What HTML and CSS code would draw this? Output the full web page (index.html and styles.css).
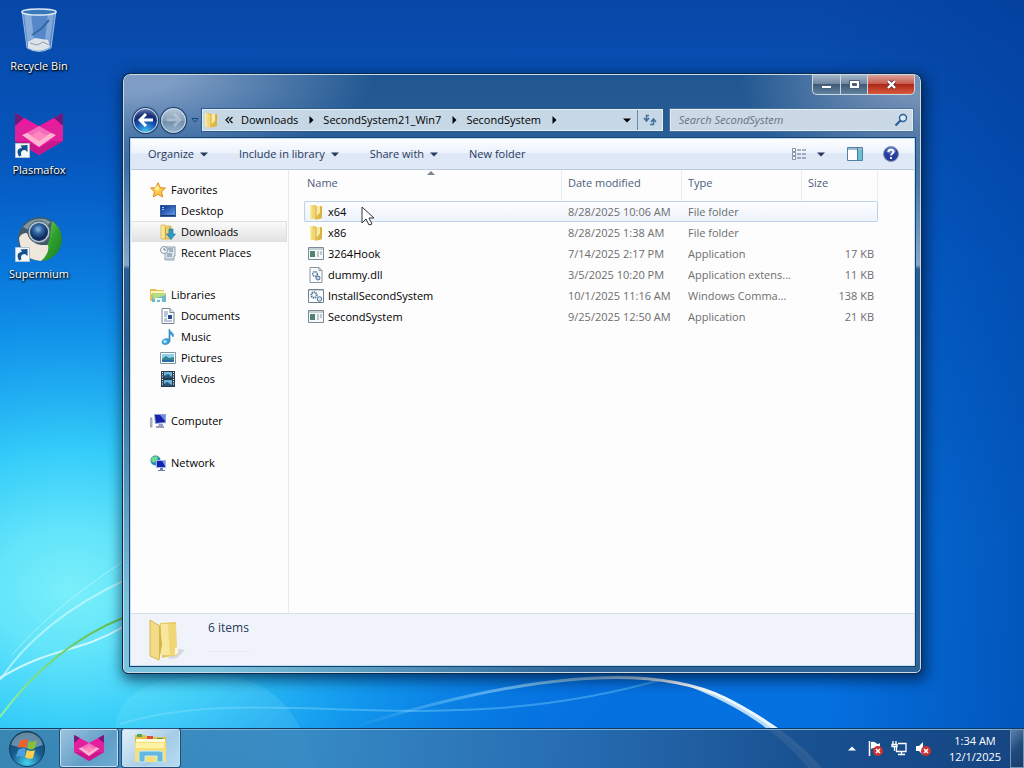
FILE: index.html
```html
<!DOCTYPE html>
<html lang="en">
<head>
<meta charset="utf-8">
<meta name="viewport" content="width=device-width, initial-scale=1">
<title>SecondSystem</title>
<link rel="stylesheet" href="styles.css">
</head>
<body>
<svg class="defs" width="0" height="0" aria-hidden="true">
  <defs>
    <linearGradient id="gold" x1="0" x2="1"><stop offset="0" stop-color="#fdf0a8"/><stop offset="1" stop-color="#e3bd45"/></linearGradient>
    <linearGradient id="goldDeep" x1="0" x2="1"><stop offset="0" stop-color="#f6df80"/><stop offset="1" stop-color="#d9a92c"/></linearGradient>
    <linearGradient id="screen" x1="0" x2="1" y2="1"><stop offset="0" stop-color="#0d2f8e"/><stop offset="1" stop-color="#5f9ae6"/></linearGradient>
  </defs>
  <symbol id="folder" viewBox="0 0 16 16">
    <path d="M2 1h5l1 1v13H2z" fill="url(#gold)"/><path d="M6 3l8-1v12l-6 2-2-1z" fill="url(#goldDeep)"/><path d="M8 2h4v9H8z" fill="#f9eaa0"/><path d="M11 9l3 1v4l-5 1z" fill="#d8b748"/><path d="M8 2v13" stroke="#c69a2e" stroke-width=".7"/>
  </symbol>
  <symbol id="star" viewBox="0 0 16 16"><path d="M8 .8l2.200 4.800 5.200.5-3.900 3.600 1.200 5.300L8 12.300 3.300 15l1.200-5.300L.6 6.100l5.200-.5z" fill="#ffc84a" stroke="#d98a1c"/><path d="M8 3l1.500 3.400L8 9 4 7z" fill="#fff0a0"/></symbol>
  <symbol id="desk" viewBox="0 0 16 16"><path d="M0 2h16v12H0z" fill="#315f9e"/><path d="M1 3h14v9H1z" fill="url(#screen)"/><path d="M1 12h14v1H1z" fill="#193a67"/><path d="M2 4h2v1H2zM2 6h2v1H2z" fill="#9cd2ff"/></symbol>
  <symbol id="down" viewBox="0 0 16 16"><path d="M1 1h4l1 1h5v13H1z" fill="url(#gold)" stroke="#d3a941" stroke-width=".7"/><path d="M5.500 3v12" stroke="#c7a043"/><path d="M9 5h4v5h2.500L11 15.500 6.500 10H9z" fill="#2f9bc5" stroke="#19719c" stroke-width=".6"/></symbol>
  <symbol id="recent" viewBox="0 0 16 16"><path d="M4 2h11v9h-1v4H5V6H4z" fill="#dce5ec" stroke="#7c8e9d" stroke-width=".8"/><circle cx="4" cy="5" r="3.500" fill="#f4f7fa" stroke="#8899a8"/><path d="M4 3v2h2M8 4h5M9 6h4M7 9h5M7 11h5" fill="none" stroke="#58748b" stroke-width=".9"/><path d="M4 13h9v2H4z" fill="#b5c4d0"/></symbol>
  <symbol id="library" viewBox="0 0 16 16"><path d="M0 2h6l1 1h7v11H0z" fill="#e4bf55"/><path d="M1 4h13v3H1z" fill="#fff5b2"/><path d="M2 6h14v9H2z" fill="#76b7c7"/><path d="M2 6h14v2L3 12z" fill="#b7dd82"/><path d="M5 15v-4h7v4h-2v-2H7v2z" fill="#eefcff"/></symbol>
  <symbol id="doc" viewBox="0 0 16 16"><path d="M2 .5h8l4 4v11H2z" fill="#fff" stroke="#77858f"/><path d="M10 .5v4h4" fill="#dbe6ee" stroke="#77858f"/><path d="M4 4h4M4 6h4M4 8h3M4 11h3M4 13h8" stroke="#738fb0"/><path d="M8 7h4v4H8z" fill="#254c91"/></symbol>
  <symbol id="music" viewBox="0 0 16 16"><path d="M9 0c1 3 6 4 4 8-1-2-2-3-3-3v7c0 4-8 5-8 1 0-3 4-4 7-3z" fill="#399fd3" stroke="#237db5" stroke-width=".6"/><circle cx="5" cy="12.500" r="1.800" fill="#9edfff"/></symbol>
  <symbol id="picture" viewBox="0 0 16 16"><path d="M.5 2.500h15v11H.5z" fill="#fff" stroke="#7f95a2"/><path d="M2 4h12v8H2z" fill="#8cd0ed"/><path d="M2 9l4-3 3 2 5-1v5H2z" fill="#398391"/><path d="M2 10h12v2H2z" fill="#2d6ea4"/></symbol>
  <symbol id="video" viewBox="0 0 16 16"><path d="M1 0h14v16H1z" fill="#26384c"/><path d="M4 1h8v6H4zM4 9h8v6H4z" fill="#67b4d9"/><path d="M4 5l4-2 4 3v1H4zM4 13l3-2 5 3v1H4z" fill="#285679"/><path d="M2.500 1v14M13.500 1v14" stroke="#fff" stroke-width="1.200" stroke-dasharray="1 1.300"/></symbol>
  <symbol id="computer" viewBox="0 0 16 16"><path d="M0 5h2v9H0z" fill="#bfc4cc" stroke="#777e8b" stroke-width=".6"/><path d="M4 1l12 0v9l-11 1z" fill="#8ea2cc"/><path d="M5 2l10 0v7l-9 1z" fill="#1722a8"/><path d="M10 2h5v6z" fill="#6b8de8"/><path d="M9 11h4v2H8zM6 13h8v2H6z" fill="#9aa0c0"/></symbol>
  <symbol id="network" viewBox="0 0 16 16"><circle cx="5.500" cy="5.500" r="5" fill="#2386b4"/><path d="M2 2l5-1 1 3-4 4-3-2z" fill="#72d694"/><path d="M6 5h10v8H6z" fill="#a4b7e5"/><path d="M7 6h8v6H7z" fill="#1524b0"/><path d="M12 6h3v5z" fill="#6994ef"/><path d="M10 13h3v2h2v1H8v-1h2z" fill="#6e7fac"/></symbol>
  <symbol id="app" viewBox="0 0 16 16"><path d="M.5 1.500h15v12H.5z" fill="#f7f9fa" stroke="#7c8c94"/><path d="M1 2h14v2H1z" fill="#c5d0d7"/><path d="M2 5h5v6H2z" fill="#4f8473"/><path d="M9 6h2M12 6h2M9 8h2M12 8h2M9 10h2" stroke="#8796a0"/></symbol>
  <symbol id="dll" viewBox="0 0 16 16"><path d="M2 .5h9l3 3v12H2z" fill="#fafcfe" stroke="#8795a2"/><path d="M11 .5v3h3" fill="none" stroke="#8795a2"/><circle cx="7" cy="7" r="2.300" fill="none" stroke="#557b9e" stroke-width="1.500" stroke-dasharray="1.400 .6"/><circle cx="10" cy="11" r="2" fill="#c9daea" stroke="#48698b"/></symbol>
  <symbol id="cmd" viewBox="0 0 16 16"><path d="M.5 1.500h15v13H.5z" fill="#fafcfe" stroke="#72818d"/><path d="M1 2h14v1H1z" fill="#c5d2de"/><circle cx="6" cy="7" r="2.700" fill="none" stroke="#55799d" stroke-width="2" stroke-dasharray="1.400 .6"/><circle cx="11.500" cy="11" r="2.300" fill="#d7e5f1" stroke="#56738e"/></symbol>
  <symbol id="fox" viewBox="0 0 48 42">
    <path d="M0 0l24 13L48 0v28L24 42 0 28z" fill="#e91aa0"/><path d="M0 0l9 5-9 8zM48 0l-9 5 9 8z" fill="#6c1b78"/><path d="M0 12l24 2-12 14L0 28zM48 12l-24 2 12 14 12 0z" fill="#e0219b"/><path d="M24 13l14 8-14 9-14-9z" fill="#f56cbd"/><path d="M7 22l5-2 12 7 12-7 5 2-17 12z" fill="#ffb3d0"/><path d="M16 23l8-5 8 5-8 5z" fill="#ff87bd"/><path d="M0 28l12 0 12 7 12-7 12 0-24 14z" fill="#c9188c"/>
  </symbol>
  <symbol id="shortcut" viewBox="0 0 15 15"><path d="M.5.5h14v14H.5z" fill="#f4f8fb" stroke="#b6c4d0"/><path d="M4 13.500C1 8 3 5 7 5L5.500 2.500 12.500 2v7L10 7C7 7 5 9 6.500 12.500z" fill="#15518d"/></symbol>
  <symbol id="caret" viewBox="0 0 8 5"><path d="M0 .5h8l-4 4z" fill="currentColor"/></symbol>
  <symbol id="chevron" viewBox="0 0 5 8"><path d="M.5 0v8l4-4z" fill="currentColor"/></symbol>
</svg>

<svg class="wallpaper" viewBox="0 0 1024 768" preserveAspectRatio="none" aria-hidden="true">
  <defs>
    <linearGradient id="sky" x1="0" y1="0" x2="0" y2="1"><stop offset="0" stop-color="#0847a7"/><stop offset=".35" stop-color="#0461cc"/><stop offset=".7" stop-color="#0673df"/><stop offset="1" stop-color="#0470e0"/></linearGradient>
    <radialGradient id="glow" gradientUnits="userSpaceOnUse" cx="0" cy="0" r="1" gradientTransform="translate(70 590) scale(560 440)"><stop offset="0" stop-color="#7aeffa"/><stop offset=".14" stop-color="#62e4fa"/><stop offset=".32" stop-color="#34ccf9"/><stop offset=".58" stop-color="#149ff0" stop-opacity=".8"/><stop offset="1" stop-color="#0673df" stop-opacity="0"/></radialGradient>
    <linearGradient id="edge" x1="0" x2="1"><stop offset=".8" stop-color="#003b98" stop-opacity="0"/><stop offset="1" stop-color="#003b98" stop-opacity=".5"/></linearGradient>
    <linearGradient id="ray" x1="0" x2="1"><stop offset="0" stop-color="#a9e8ff" stop-opacity="0"/><stop offset=".5" stop-color="#b7eaff" stop-opacity=".8"/><stop offset=".7" stop-color="#fff"/><stop offset="1" stop-color="#d5efff"/></linearGradient>
    <linearGradient id="leaf" x1="0" y1="1" x2="1" y2="0"><stop offset="0" stop-color="#8cf2a8"/><stop offset="1" stop-color="#61b849"/></linearGradient>
  </defs>
  <path fill="url(#sky)" d="M0 0h1024v768H0z"/><path fill="url(#glow)" d="M0 0h1024v768H0z"/><path fill="url(#edge)" d="M0 0h1024v768H0z"/>
  <path d="M120 768C100 695 140 680 210 675C270 675 300 710 315 768z" fill="#b2f3ff" opacity=".12"/>
  <g fill="none">
    <path d="M120 724C260 680 430 745 660 680" stroke="#8fe3ff" stroke-width="2" opacity=".35"/>
    <path d="M350 728C520 675 650 662 725 698Q785 728 818 768" stroke="url(#ray)" stroke-width="3"/>
    <path d="M680 683Q775 711 822 768H808Q765 714 680 683z" fill="#e7f8ff" opacity=".8"/>
    <path d="M0 680Q40 620 125 580" stroke="#d9fbff" stroke-width="2" opacity=".6"/>
    <path d="M0 678C55 645 75 655 125 626" stroke="#e8fdff" stroke-width="2" opacity=".8"/>
    <path d="M12 655Q50 610 125 560" stroke="#d9fbff" opacity=".5"/>
    <path d="M0 717Q52 646 125 617" stroke="url(#leaf)" stroke-width="2"/>
  </g>
</svg>

<main class="desktop">
  <nav class="shortcuts" aria-label="Desktop icons">
    <button class="shortcut" type="button">
      <svg class="shortcut-art" viewBox="0 0 48 48" aria-hidden="true"><path d="M7 5l5 37q12 7 24 0l5-37z" fill="#8bb1dd" fill-opacity=".6" stroke="#c5dced" stroke-opacity=".7"/><path d="M9 7h7l4 36-7-2z" fill="#e7f4ff" opacity=".35"/><path d="M33 7h6l-5 34-5 2z" fill="#e7f4ff" opacity=".3"/><path d="M17 29l9-6 8-9" fill="none" stroke="#3268a4" stroke-width="2"/><path d="M13 36l7-4 13 2 2 7q-11 7-22 1z" fill="#dde5e8"/><path d="M15 37l7 2 6-3 6 3" fill="none" stroke="#8c9fab"/><ellipse cx="24" cy="6" rx="17" ry="3" fill="#3976ba" stroke="#dceaf5" stroke-width="1.500"/></svg>
      <span>Recycle Bin</span>
    </button>
    <button class="shortcut" type="button">
      <svg class="shortcut-art" viewBox="0 0 48 48" aria-hidden="true"><use href="#fox" y="3" width="48" height="42"/><use href="#shortcut" x="0" y="33" width="15" height="15"/></svg>
      <span>Plasmafox</span>
    </button>
    <button class="shortcut" type="button">
      <svg class="shortcut-art" viewBox="0 0 48 48" aria-hidden="true"><defs><radialGradient id="lens" cx=".45" cy=".35"><stop offset="0" stop-color="#8db9e2"/><stop offset=".5" stop-color="#2f639f"/><stop offset="1" stop-color="#0f2f62"/></radialGradient><linearGradient id="green" x1="0" x2="1" y2="1"><stop offset="0" stop-color="#8ad667"/><stop offset=".5" stop-color="#2fa12d"/><stop offset="1" stop-color="#177a24"/></linearGradient></defs><circle cx="25" cy="25" r="22" fill="#405c6b"/><path d="M8 13q8-10 22-8l6 3-4 4q-10-4-18 4z" fill="#7d98a4"/><path d="M37 7a22 22 0 0 1-9 40l-2-8q10-10 9-20z" fill="url(#green)"/><path d="M4 24q2-5 8-5 3 10 14 12l7 0q2 8-7 16Q6 46 4 24z" fill="#eee8dc"/><circle cx="24" cy="18" r="11" fill="#b7c4cc" stroke="#47606f"/><circle cx="24" cy="18" r="9" fill="url(#lens)"/><use href="#shortcut" x="0" y="33" width="15" height="15"/></svg>
      <span>Supermium</span>
    </button>
  </nav>

  <section class="window" aria-label="SecondSystem">
    <div class="caption">
      <button class="cap cap-min" type="button" aria-label="Minimize"><svg width="13" height="12" viewBox="0 0 13 12"><path d="M1.500 6.500h10v3h-10z" fill="#fff" stroke="#4b5f78"/></svg></button>
      <button class="cap cap-max" type="button" aria-label="Maximize"><svg width="13" height="12" viewBox="0 0 13 12"><path d="M1.500 1.500h10v8h-10zM4.500 4.500v2h4v-2z" fill="#fff" fill-rule="evenodd" stroke="#4b5f78"/></svg></button>
      <button class="cap cap-close" type="button" aria-label="Close"><svg width="13" height="12" viewBox="0 0 13 12"><path d="M3 2l7 7M10 2l-7 7" stroke="#6d3436" stroke-width="4"/><path d="M3 2l7 7M10 2l-7 7" stroke="#fff" stroke-width="2.400"/></svg></button>
    </div>
    <div class="navbar">
      <div class="history">
        <button class="round back" type="button" aria-label="Back"><svg width="16" height="14" viewBox="0 0 16 14"><path d="M8 1L2 7l6 6M2 7h13" fill="none" stroke="#fff" stroke-width="3"/></svg></button>
        <button class="round forward" type="button" aria-label="Forward"><svg width="16" height="14" viewBox="0 0 16 14"><path d="M8 1l6 6-6 6M14 7H1" fill="none" stroke="#c9d7e3" stroke-width="3" opacity=".5"/></svg></button>
        <button class="recent" type="button" aria-label="Recent pages"><svg width="8" height="5" viewBox="0 0 8 5"><path d="M1 .5h6L4 4z" fill="#5b87b5" stroke="#174577"/></svg></button>
      </div>
      <div class="address">
        <svg class="icon" aria-hidden="true"><use href="#folder"/></svg>
        <button class="crumb crumb-first" type="button" aria-label="Previous locations"><svg width="8" height="8" viewBox="0 0 8 8"><path d="M4 1L1 4l3 3M7.500 1l-3 3 3 3" fill="none" stroke="#111" stroke-width="1.300"/></svg></button>
        <button class="crumb" type="button">Downloads<svg width="5" height="8"><use href="#chevron"/></svg></button>
        <button class="crumb" type="button">SecondSystem21_Win7<svg width="5" height="8"><use href="#chevron"/></svg></button>
        <button class="crumb" type="button">SecondSystem<svg width="5" height="8"><use href="#chevron"/></svg></button>
        <button class="drop" type="button" aria-label="Previous locations list"><svg width="8" height="5"><use href="#caret"/></svg></button>
        <button class="refresh" type="button" aria-label="Refresh"><svg width="16" height="14" viewBox="0 0 16 14"><path d="M7 2.500H4.500V7M2 5l2.500 3L7 5M8 11.500h3.500V7M9 9l2.500-3L14 9" fill="none" stroke="#426f9f" stroke-width="1.500"/></svg></button>
      </div>
      <form class="search">
        <input type="search" aria-label="Search SecondSystem" placeholder="Search SecondSystem">
        <svg width="14" height="14" viewBox="0 0 14 14" aria-hidden="true"><circle cx="9" cy="5" r="3.500" fill="#dcecf7" stroke="#275d98" stroke-width="1.400"/><path d="M6.500 7.500L1.500 12.500" stroke="#275d98" stroke-width="2.200"/></svg>
      </form>
    </div>

    <div class="client">
      <div class="toolbar">
        <button type="button">Organize<svg width="8" height="5"><use href="#caret"/></svg></button>
        <button type="button">Include in library<svg width="8" height="5"><use href="#caret"/></svg></button>
        <button type="button">Share with<svg width="8" height="5"><use href="#caret"/></svg></button>
        <button type="button">New folder</button>
        <div class="tools">
          <button type="button" aria-label="Change view"><svg width="16" height="14" viewBox="0 0 16 14"><path d="M1.500 1.500h3v3h-3zM1.500 5.500h3v3h-3zM1.500 9.500h3v3h-3z" fill="#fff" stroke="#8290a5"/><path d="M6 3h4M11 3h4M6 7h4M11 7h4M6 11h4M11 11h4" stroke="#5c6f8d"/></svg></button>
          <button class="view-more" type="button" aria-label="More view options"><svg width="8" height="5"><use href="#caret"/></svg></button>
          <button type="button" aria-label="Show the preview pane"><svg width="16" height="14" viewBox="0 0 16 14"><path d="M.5.5h15v13H.5z" fill="#fff" stroke="#4e83a5"/><path d="M1 1h14v2H1z" fill="#9cbcd3"/><path d="M10 3h5v10h-5z" fill="#69bfd4"/><path d="M10.500 1v12" stroke="#437d9c"/></svg></button>
          <button type="button" aria-label="Get help"><svg width="16" height="16" viewBox="0 0 16 16"><circle cx="8" cy="8" r="7.500" fill="#263f9e" stroke="#8993ae"/><path d="M3 6a5 5 0 0 1 10 0q-5 3-10 0z" fill="#839de0" opacity=".65"/><path d="M5.500 6c0-3 5-3 5 0 0 1.500-2.500 1.500-2.500 3.500M8 11v2" fill="none" stroke="#fff" stroke-width="1.800"/></svg></button>
        </div>
      </div>
      <div class="panes">
        <nav class="tree" aria-label="Navigation pane">
          <div class="group">
            <a class="root" href="#favorites"><svg class="icon"><use href="#star"/></svg>Favorites</a>
            <a href="#desktop"><svg class="icon"><use href="#desk"/></svg>Desktop</a>
            <a class="selected" href="#downloads"><svg class="icon"><use href="#down"/></svg>Downloads</a>
            <a href="#recent-places"><svg class="icon"><use href="#recent"/></svg>Recent Places</a>
          </div>
          <div class="group">
            <a class="root" href="#libraries"><svg class="icon"><use href="#library"/></svg>Libraries</a>
            <a href="#documents"><svg class="icon"><use href="#doc"/></svg>Documents</a>
            <a href="#music-files"><svg class="icon"><use href="#music"/></svg>Music</a>
            <a href="#pictures"><svg class="icon"><use href="#picture"/></svg>Pictures</a>
            <a href="#videos"><svg class="icon"><use href="#video"/></svg>Videos</a>
          </div>
          <div class="group"><a class="root" href="#my-computer"><svg class="icon"><use href="#computer"/></svg>Computer</a></div>
          <div class="group"><a class="root" href="#my-network"><svg class="icon"><use href="#network"/></svg>Network</a></div>
        </nav>
        <div class="listing">
          <table class="files">
            <colgroup><col class="col-name"><col class="col-date"><col class="col-type"><col class="col-size"></colgroup>
            <thead><tr><th scope="col" aria-sort="ascending">Name<svg class="sort" width="8" height="4" viewBox="0 0 8 4" aria-hidden="true"><path d="M0 4l4-4 4 4z" fill="#7b8490"/></svg></th><th scope="col">Date modified</th><th scope="col">Type</th><th scope="col">Size</th></tr></thead>
            <tbody>
              <tr class="hot"><td><span class="file"><svg class="icon"><use href="#folder"/></svg>x64</span></td><td>8/28/2025 10:06 AM</td><td>File folder</td><td></td></tr>
              <tr><td><span class="file"><svg class="icon"><use href="#folder"/></svg>x86</span></td><td>8/28/2025 1:38 AM</td><td>File folder</td><td></td></tr>
              <tr><td><span class="file"><svg class="icon"><use href="#app"/></svg>3264Hook</span></td><td>7/14/2025 2:17 PM</td><td>Application</td><td>17 KB</td></tr>
              <tr><td><span class="file"><svg class="icon"><use href="#dll"/></svg>dummy.dll</span></td><td>3/5/2025 10:20 PM</td><td>Application extens...</td><td>11 KB</td></tr>
              <tr><td><span class="file"><svg class="icon"><use href="#cmd"/></svg>InstallSecondSystem</span></td><td>10/1/2025 11:16 AM</td><td>Windows Comma...</td><td>138 KB</td></tr>
              <tr><td><span class="file"><svg class="icon"><use href="#app"/></svg>SecondSystem</span></td><td>9/25/2025 12:50 AM</td><td>Application</td><td>21 KB</td></tr>
            </tbody>
          </table>
        </div>
      </div>
      <footer class="details">
        <svg width="40" height="44" viewBox="0 0 40 44" aria-hidden="true"><path d="M26 30l11 2-8 8-9 1z" fill="#82848c" opacity=".25"/><path d="M12 5l16-1 1 33-15 3z" fill="#e8ca62"/><path d="M13 6h9v31h-9z" fill="#f8e89b"/><path d="M20 6h8v31l-6 1z" fill="#efd777"/><path d="M27 30l3-1v6l-3 2z" fill="#fff8dd"/><path d="M2 2l10 6 1 20-2 14-9-4z" fill="#f3dc87" stroke="#dbb74e"/><path d="M12 8l2 19-3 15V9z" fill="#d5b34e"/></svg>
        <div class="summary"><span>6 items</span></div>
      </footer>
    </div>
  </section>
  <svg class="cursor" width="14" height="20" viewBox="0 0 14 20" aria-hidden="true"><path d="M1 1v16l4-4 3 6 3-1-3-6h5z" fill="#fff" stroke="#333"/></svg>
</main>

<footer class="taskbar">
  <button class="start" type="button" aria-label="Start"><svg width="38" height="38" viewBox="0 0 38 38"><defs><radialGradient id="orb" cx=".5" cy=".9" r=".9"><stop offset="0" stop-color="#42d3f0"/><stop offset=".5" stop-color="#175d91"/><stop offset="1" stop-color="#174263"/></radialGradient></defs><circle cx="19" cy="19" r="17.500" fill="url(#orb)" stroke="#193c5b"/><path d="M3 15a16.500 16.500 0 0 1 32 0q-15 6-32 0z" fill="#dceaf2" opacity=".4"/><path d="M12 11q4-3 8-1l-2 8q-4-2-8 0z" fill="#ef6128"/><path d="M21 11q4 2 8-1l-2 8q-4 3-8 0z" fill="#86bf3b"/><path d="M10 20q4-3 8-1l-2 8q-4-2-8 0z" fill="#4d9fe0"/><path d="M19 20q4 2 8 0l-2 8q-4 2-8-1z" fill="#ffd04d"/></svg></button>
  <button class="task" type="button" aria-label="Plasmafox"><svg width="34" height="26"><use href="#fox"/></svg></button>
  <button class="task task-active" type="button" aria-label="SecondSystem"><svg width="34" height="30" viewBox="0 0 34 30"><path d="M1 2h10l2 2h19v24H1z" fill="#e4bd45"/><path d="M3 1h5v3H3z" fill="#4aa85c"/><path d="M13 3h6v3h-6z" fill="#d94f3d"/><path d="M23 5h6v2h-6z" fill="#4c9a5f"/><path d="M2 6h29v3H2z" fill="#fffbd9"/><path d="M1 9h31v20H1z" fill="#f7de75"/><path d="M2 10h28v5H2z" fill="#fff1a5"/><path d="M5 29v-9q0-2 3-2h18q3 0 3 2v9h-6v-6H11v6z" fill="#64b8df" stroke="#c6ecfa"/></svg></button>
  <div class="tray">
    <button type="button" aria-label="Show hidden icons"><svg width="8" height="5" viewBox="0 0 8 5"><path d="M0 4.500l4-4 4 4z" fill="#fff"/></svg></button>
    <button type="button" aria-label="Action Center"><svg width="17" height="17" viewBox="0 0 17 17"><path d="M2.500 1v15" stroke="#fff" stroke-width="1.500"/><path d="M4 2q3-1 5 1t4 0v7q-2 1-4-1t-5 0z" fill="#fff"/><circle cx="11" cy="11" r="5" fill="#ce3030"/><path d="M9 9l4 4M13 9l-4 4" stroke="#fff" stroke-width="1.600"/></svg></button>
    <button type="button" aria-label="Network"><svg width="17" height="17" viewBox="0 0 17 17"><path d="M7 3.500h8v8H5.500V7M10.500 12v2.500M7 14.500h7M2 1v3M5 1v3M1 4.500h5v2H1zM3.500 7v4" fill="none" stroke="#fff" stroke-width="1.300"/></svg></button>
    <button type="button" aria-label="Volume muted"><svg width="17" height="17" viewBox="0 0 17 17"><path d="M1 6h3l4-4v13l-4-4H1z" fill="#fff"/><circle cx="11" cy="11" r="5" fill="#ce3030"/><path d="M9 9l4 4M13 9l-4 4" stroke="#fff" stroke-width="1.600"/></svg></button>
    <button class="clock" type="button"><span>1:34 AM</span><span>12/1/2025</span></button>
    <button class="peek" type="button" aria-label="Show desktop"></button>
  </div>
</footer>
</body>
</html>
```

FILE: styles.css
```css
* { box-sizing: border-box; }

body {
  margin: 0;
  min-height: 100vh;
  display: flex;
  flex-direction: column;
  position: relative;
  background: #0562cd;
  color: #000;
  font: 11px/16px "Open Sans", "Noto Sans", sans-serif;
}

button, input {
  margin: 0;
  padding: 0;
  border: 0;
  background: none;
  color: inherit;
  font: inherit;
}

svg { display: block; flex: none; }
a { color: inherit; text-decoration: none; }
.defs { position: absolute; }
.icon { width: 16px; height: 16px; }

.wallpaper {
  position: absolute;
  inset: 0;
  width: 100%;
  height: 100%;
  z-index: -1;
}

/* Desktop */
.desktop {
  flex: 1;
  display: flex;
  position: relative;
}

.shortcuts {
  width: 123px;
  padding-top: 6px;
  display: flex;
  flex-direction: column;
  gap: 36px;
  flex: none;
}

.shortcut {
  width: 78px;
  height: 68px;
  display: flex;
  flex-direction: column;
  align-items: center;
  gap: 4px;
  color: #fff;
  text-shadow: 0 1px 2px #000, 1px 1px 2px #000;
}

.shortcut-art { width: 48px; height: 48px; }

/* Window frame */
.window {
  flex: 1;
  min-width: 0;
  margin: 74px 103px 55px 0;
  padding: 0 5px 6px 6px;
  display: flex;
  flex-direction: column;
  border: 1px solid #c6dcea;
  border-radius: 7px 7px 5px 5px;
  outline: 1px solid #0b2a4c;
  background:
    radial-gradient(ellipse 250px 90px at 0 0, #8da8ccdd 20%, transparent),
    radial-gradient(ellipse 180px 110px at 100% 0, #8299bbdd 20%, transparent),
    radial-gradient(ellipse 450px 330px at 0 100%, #7cc4de 20%, transparent),
    linear-gradient(#205790 0, #285d98 60px, #87a7c7 190px, #295d92 194px, #2d6599 100%);
  box-shadow: 2px 4px 14px 3px #00183cb3;
}

.caption {
  height: 33px;
  display: flex;
  justify-content: flex-end;
  align-items: flex-start;
}

.cap {
  height: 20px;
  display: grid;
  place-items: center;
  border: 1px solid #cbd9e5;
  border-top: 0;
  border-right: 0;
  background: linear-gradient(#a5b6c9, #6e859e 48%, #405a78 50%, #60839e);
}

.cap-min { width: 28px; border-radius: 0 0 0 5px; }
.cap-max { width: 27px; }
.cap-close {
  width: 48px;
  border-right: 1px solid #cbd9e5;
  border-radius: 0 0 5px;
  background: linear-gradient(#dba198, #c7594b 48%, #ac2719 50%, #d75a3c);
}

.navbar {
  height: 30px;
  padding: 0 2px 6px 3px;
  display: flex;
  align-items: center;
}

.history {
  width: 69px;
  flex: none;
  display: flex;
  align-items: center;
  gap: 3px;
}

.round {
  width: 25px;
  height: 25px;
  display: grid;
  place-items: center;
  border: 1px solid #d1e3f2;
  border-radius: 50%;
  box-shadow: 0 0 1px 1px #17385e;
}

.back { background: radial-gradient(circle at 50% 100%, #42c9f5, #174bae 45%, #15296e 65%, #8da7d3); }
.forward { background: linear-gradient(#b4c6d8, #8aa0b9 50%, #708cab 52%, #95b2cb); }
.recent { padding: 4px 2px; }

.address {
  flex: 2;
  min-width: 0;
  height: 22px;
  display: flex;
  align-items: center;
  border: 1px solid #dfedf7;
  outline: 1px solid #315a86;
  background: #c6d7e6;
}

.crumb {
  display: flex;
  align-items: center;
  gap: 11px;
  padding-right: 9px;
  white-space: nowrap;
}

.crumb-first { padding: 0 8px 0 6px; }

.drop {
  width: 20px;
  height: 20px;
  margin-left: auto;
  display: grid;
  place-items: center;
}

.refresh {
  width: 25px;
  height: 20px;
  display: grid;
  place-items: center;
  border-left: 1px solid #6c88a6;
}

.search {
  flex: 1;
  min-width: 0;
  height: 22px;
  margin-left: 7px;
  padding: 0 4px 0 8px;
  display: flex;
  align-items: center;
  border: 1px solid #dfedf7;
  outline: 1px solid #4f7298;
  background: #cbd8e5;
}

.search input {
  flex: 1;
  min-width: 0;
  outline: 0;
}

.search input::placeholder { color: #657483; font-style: italic; opacity: 1; }

/* Client area */
.client {
  flex: 1;
  display: flex;
  flex-direction: column;
  border: 1px solid #bfe0f2;
  outline: 1px solid #18416d;
  background: #fdfdfe;
}

.toolbar {
  height: 31px;
  padding: 0 15px 0 17px;
  display: flex;
  align-items: center;
  gap: 31px;
  background: linear-gradient(#fcfdff, #edf3fc 45%, #dde7f5 50%, #e0e9f7);
  border-bottom: 1px solid #bac9de;
  color: #27395d;
}

.toolbar button {
  display: flex;
  align-items: center;
  gap: 6px;
}

.tools {
  margin-left: auto;
  display: flex;
  align-items: center;
  gap: 20px;
}

.tools .view-more { margin: 0 2px 0 -10px; }

.panes { flex: 1; display: flex; }

.tree {
  width: 158px;
  flex: none;
  padding: 9px 1px 9px 0;
  display: flex;
  flex-direction: column;
  gap: 21px;
  border-right: 1px solid #e4eaf2;
}

.tree a {
  height: 21px;
  padding-left: 29px;
  display: flex;
  align-items: center;
  gap: 5px;
}

.tree .root { padding-left: 19px; }
.tree .selected {
  border: 1px solid #dedede;
  border-left-color: #f0f0f0;
  padding-left: 28px;
  background: linear-gradient(#fafafa, #e3e3e3);
}

.listing { flex: 1; min-width: 0; padding-left: 15px; }

.files {
  width: 574px;
  table-layout: fixed;
  border-collapse: separate;
  border-spacing: 0;
}

.col-name { width: 258px; }
.col-date { width: 120px; }
.col-type { width: 120px; }
.col-size { width: 76px; }

.files th {
  height: 31px;
  padding: 0 0 6px 6px;
  border-right: 1px solid #e6edf5;
  color: #4c607a;
  font-weight: 400;
  text-align: left;
  position: relative;
}

.files th:first-child { padding-left: 3px; }
.sort { position: absolute; top: 1px; left: 50%; margin-left: -6px; }

.files td {
  height: 21px;
  padding: 0 0 0 6px;
  color: #6d6d6d;
  white-space: nowrap;
}

.files td:first-child { padding-left: 4px; color: #000; }
.files td:last-child { padding-right: 4px; text-align: right; }

.file { display: flex; align-items: center; gap: 4px; }

.files .hot td {
  border: 1px solid #bdd0e6;
  border-width: 1px 0;
  background: linear-gradient(#fcfdff, #edf3fc);
}

.files .hot td:first-child { border-left-width: 1px; padding-left: 3px; border-radius: 2px 0 0 2px; }
.files .hot td:last-child { border-right-width: 1px; border-radius: 0 2px 2px 0; }

.details {
  height: 52px;
  padding: 4px 17px;
  display: flex;
  gap: 20px;
  border-top: 1px solid #d5dfec;
  background: #f0f4fa;
  color: #27395d;
}

.summary {
  height: 34px;
  padding-top: 2px;
  border-bottom: 1px dotted #dde3ec;
  font-size: 12px;
}

.cursor { position: absolute; left: 361px; top: 206px; }

/* Taskbar */
.taskbar {
  height: 40px;
  padding-left: 8px;
  display: flex;
  align-items: stretch;
  border-top: 1px solid #123a63;
  box-shadow: inset 0 1px #78b4d9;
  background: linear-gradient(90deg, #3a80ace6, #3a88c0e6 30%, #2b6daee6 55%, #1a4c87e6 80%, #18437be6);
}

.start { width: 38px; margin-right: 14px; }

.task {
  width: 58px;
  margin: 0 4px 1px 0;
  display: grid;
  place-items: center;
  border: 1px solid #c3def0;
  border-radius: 2px;
  outline: 1px solid #214d78;
  background: linear-gradient(135deg, #b4d1e6cc, #6aa3cbcc 60%, #79b5dacc);
}

.task-active { background: linear-gradient(135deg, #e2f0f9, #a5cce6 60%, #b4dcf2); }

.tray {
  margin-left: auto;
  display: flex;
  align-items: center;
  gap: 7px;
  color: #fff;
}

.tray button:first-child { margin-right: 4px; }

.clock {
  width: 56px;
  margin-left: 8px;
  display: flex;
  flex-direction: column;
  align-items: center;
}

.peek {
  width: 14px;
  align-self: stretch;
  border: 1px solid #7595b8;
  background: linear-gradient(135deg, #5d82ab, #214b7e 50%, #173c6c);
}
```
